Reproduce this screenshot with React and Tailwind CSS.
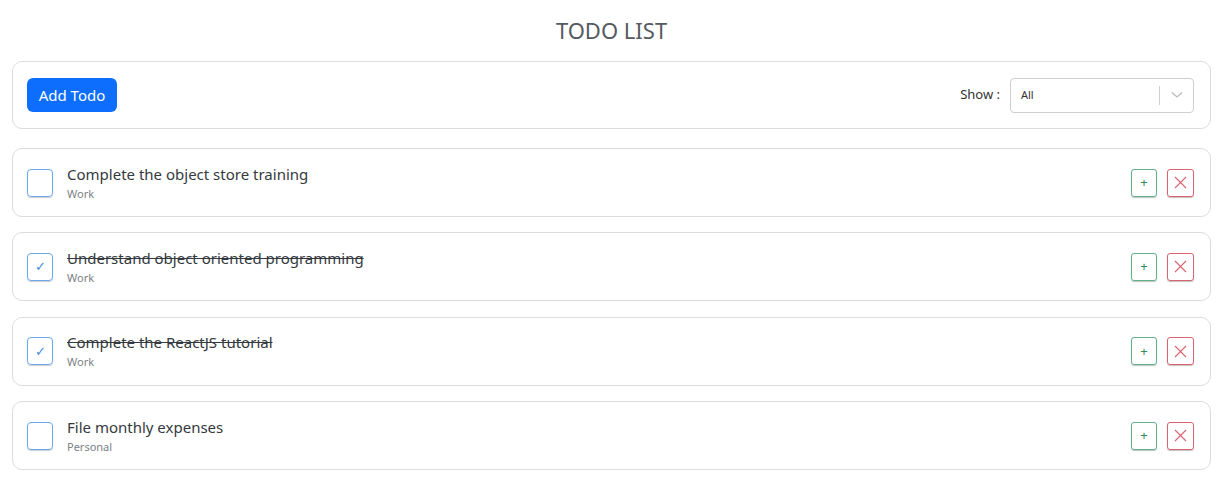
const todos = [
  { title: "Complete the object store training", tag: "Work", done: false },
  { title: "Understand object oriented programming", tag: "Work", done: true },
  { title: "Complete the ReactJS tutorial", tag: "Work", done: true },
  { title: "File monthly expenses", tag: "Personal", done: false },
];

function TodoRow({ todo }) {
  return (
    <div className="flex items-center h-[69px] pl-[14px] pr-[16px] bg-white border border-[#dcdcdc] rounded-[10px]">
      <div className="w-[26px] h-[28px] rounded-[4px] border border-[#6aa8ee] shadow-[0_1px_1px_rgba(0,0,0,0.2)] flex items-center justify-center text-[#3d8ae8] text-[13px]">
        {todo.done ? "✓" : ""}
      </div>
      <div className="ml-[14px] flex flex-col">
        <span className={"text-[15px] leading-[20px] text-[#343a40] " + (todo.done ? "line-through" : "")}>
          {todo.title}
        </span>
        <span className="mt-[2px] text-[11px] leading-[16px] text-[#7a7f85]">{todo.tag}</span>
      </div>
      <div className="ml-auto flex items-center gap-[10px]">
        <button className="w-[26px] h-[28px] rounded-[3px] border border-[#5fb18a] shadow-[0_1px_1px_rgba(0,0,0,0.25)] flex items-center justify-center text-[#2e8b57] text-[13px] leading-none">
          +
        </button>
        <button className="w-[27px] h-[28px] rounded-[3px] border border-[#d9646f] shadow-[0_1px_1px_rgba(0,0,0,0.25)] flex items-center justify-center">
          <svg width="13" height="13" viewBox="0 0 13 13" fill="none" stroke="#d9646f" strokeWidth="1.1">
            <path d="M1 1 L12 12 M12 1 L1 12" />
          </svg>
        </button>
      </div>
    </div>
  );
}

export default function App() {
  return (
    <div className="min-h-screen bg-white px-[12px] font-['Noto_Sans','Open_Sans',sans-serif]">
      <h1 className="text-center text-[22px] leading-[30px] pt-[15px] pb-[16px] text-[#555a60]">TODO LIST</h1>
      <div className="flex items-center justify-between h-[68px] pl-[14px] pr-[16px] border border-[#dcdcdc] rounded-[10px]">
        <button className="w-[90px] h-[34px] rounded-[6px] bg-[#0d6efd] text-white text-[15px]">Add Todo</button>
        <div className="flex items-center">
          <span className="text-[13px] text-[#333] mr-[10px]">Show :</span>
          <div className="w-[184px] h-[35px] border border-[#cfcfcf] rounded-[4px] flex items-center">
            <span className="ml-[10px] text-[11px] text-[#333]">All</span>
            <div className="ml-auto w-px h-[19px] bg-[#cfcfcf]" />
            <div className="w-[33px] flex items-center justify-center">
              <svg width="12" height="8" viewBox="0 0 12 8" fill="none" stroke="#bbb" strokeWidth="1.3">
                <path d="M1 1.5 L6 6 L11 1.5" />
              </svg>
            </div>
          </div>
        </div>
      </div>
      <div className="flex flex-col gap-[15.4px] mt-[19px]">
        {todos.map((t) => (
          <TodoRow key={t.title} todo={t} />
        ))}
      </div>
    </div>
  );
}
